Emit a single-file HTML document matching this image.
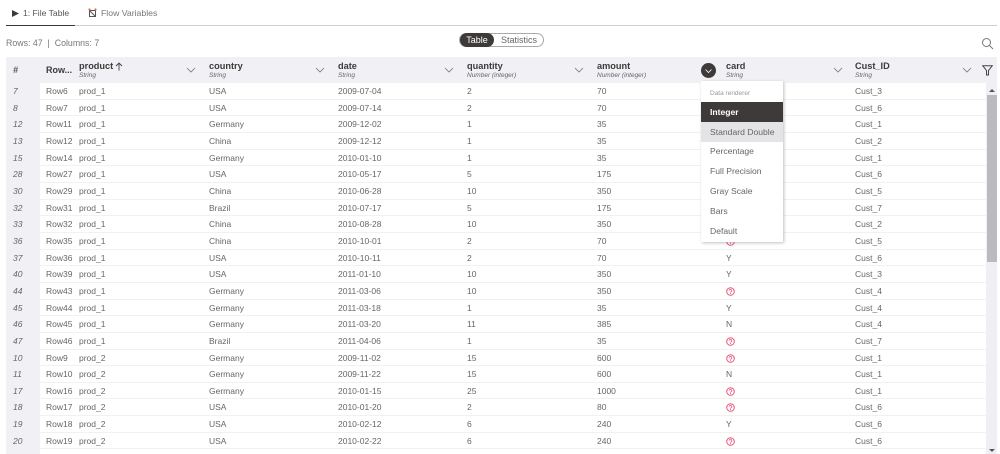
<!DOCTYPE html>
<html><head><meta charset="utf-8">
<style>
html,body{margin:0;padding:0;width:1000px;height:454px;overflow:hidden;background:#fff;font-family:"Liberation Sans",sans-serif;color:#666;font-size:8.5px}
.a{position:absolute;white-space:nowrap}
#hdr{position:absolute;left:6px;top:57px;width:991px;height:26px;background:#f0f0f5}
#idx{position:absolute;left:6px;top:83px;width:34px;height:371px;background:#f0f0f5}
#rows{position:absolute;left:0;top:83px;width:987px}
.r{position:relative;height:16.667px;line-height:17.5px;}
.r:after{content:"";position:absolute;left:40px;right:0;bottom:0;height:1px;background:#f1f1f5}
.r span{position:absolute;top:0;white-space:nowrap}
.r .n{left:13px;font-style:italic}
.r .b{left:46px}.r .c{left:79px}.r .d{left:209px}.r .e{left:338px}.r .f{left:467px}.r .g{left:597px}.r .h{left:726px}.r .i{left:855px}
.r svg{position:absolute;left:726px;top:4px}
.t{font-size:9.2px;font-weight:bold;color:#3e3a39;position:absolute;top:61px;white-space:nowrap}
.s{font-size:6.5px;font-style:italic;color:#666;position:absolute;top:72px;white-space:nowrap}
.ch{position:absolute;top:67px}
#menu{position:absolute;left:701px;top:81px;width:82px;height:161px;background:#fff;box-shadow:1px 1px 3px rgba(0,0,0,.25)}
#menu div{position:absolute;left:0;width:82px;height:20px;line-height:20px;padding-left:9px;box-sizing:border-box;font-size:8.6px;color:#666}
</style></head>
<body>
<svg class="a" style="left:12px;top:10px" width="7" height="7"><path d="M0 0L7 3.5L0 7Z" fill="#3e3a39"/></svg>
<div class="a" style="left:23px;top:8px;font-size:8.6px;color:#555;line-height:11px">1: File Table</div>
<svg class="a" style="left:88px;top:8px" width="9" height="10" fill="none"><path d="M1.5 2.5h6v6h-6z M1.5 2.5l6 6" stroke="#555" stroke-width="1"/><circle cx="1.5" cy="1.5" r="1.1" fill="#e0685f"/><circle cx="7.5" cy="1.5" r="1.1" fill="#e0685f"/></svg>
<div class="a" style="left:101px;top:8px;font-size:8.7px;color:#777;line-height:11px">Flow Variables</div>
<div class="a" style="left:6px;top:25px;width:991px;height:1px;background:#cfcfcf"></div>
<div class="a" style="left:6px;top:24.5px;width:69px;height:1.5px;background:#3e3a39"></div>
<div class="a" style="left:6px;top:38px;font-size:8.8px;color:#777;line-height:11px">Rows: 47 &nbsp;|&nbsp; Columns: 7</div>

<div class="a" style="left:459px;top:33px;width:85px;height:14px;border:1px solid #aaa;border-radius:8px;box-sizing:border-box"></div>
<div class="a" style="left:460px;top:33px;width:34px;height:14px;background:#3e3a39;border-radius:7px;color:#fff;font-size:9px;line-height:14px;text-align:center">Table</div>
<div class="a" style="left:501px;top:33px;font-size:9px;line-height:14px;color:#666">Statistics</div>
<svg class="a" style="left:981px;top:37px" width="13" height="13" fill="none" stroke="#777"><circle cx="5.5" cy="5.5" r="4"/><path d="M8.5 8.5L12 12"/></svg>

<div id="hdr"></div><div id="idx"></div>
<div class="a" style="left:13px;top:65px;font-size:9px;font-weight:bold;font-style:italic;color:#555;line-height:11px">#</div>
<div class="t" style="left:46px;top:65px;line-height:11px;font-size:9px">Row...</div>
<div class="t" style="left:79px">product</div><div class="s" style="left:79px">String</div>
<svg class="a" style="left:115px;top:62px" width="8" height="9" fill="none" stroke="#444" stroke-width=".9"><path d="M4 8.5V1M1 4l3-3l3 3"/></svg>
<div class="t" style="left:209px">country</div><div class="s" style="left:209px">String</div>
<div class="t" style="left:338px">date</div><div class="s" style="left:338px">String</div>
<div class="t" style="left:467px">quantity</div><div class="s" style="left:467px">Number (integer)</div>
<div class="t" style="left:597px">amount</div><div class="s" style="left:597px">Number (integer)</div>
<div class="t" style="left:726px">card</div><div class="s" style="left:726px">String</div>
<div class="t" style="left:855px">Cust_ID</div><div class="s" style="left:855px">String</div>
<svg class="ch" style="left:186px" width="10" height="6" fill="none" stroke="#777" stroke-width=".8"><path d="M1 1l4 4l4-4"/></svg>
<svg class="ch" style="left:315px" width="10" height="6" fill="none" stroke="#777" stroke-width=".8"><path d="M1 1l4 4l4-4"/></svg>
<svg class="ch" style="left:444px" width="10" height="6" fill="none" stroke="#777" stroke-width=".8"><path d="M1 1l4 4l4-4"/></svg>
<svg class="ch" style="left:574px" width="10" height="6" fill="none" stroke="#777" stroke-width=".8"><path d="M1 1l4 4l4-4"/></svg>
<svg class="ch" style="left:833px" width="10" height="6" fill="none" stroke="#777" stroke-width=".8"><path d="M1 1l4 4l4-4"/></svg>
<svg class="ch" style="left:962px" width="10" height="6" fill="none" stroke="#777" stroke-width=".8"><path d="M1 1l4 4l4-4"/></svg>
<svg class="a" style="left:701px;top:63px" width="15" height="15"><circle cx="7.5" cy="7.5" r="7.5" fill="#3e3a39"/><path d="M4.5 6.5l3 3l3-3" fill="none" stroke="#fff" stroke-width=".8"/></svg>
<svg class="a" style="left:982px;top:65px" width="11" height="11" fill="none" stroke="#444"><path d="M.8 .8h9.4L6.5 5.5v4.5h-2V5.5z"/></svg>

<svg width="0" height="0" style="position:absolute"><defs><g id="q"><circle cx="4.5" cy="4.5" r="3.8" fill="none" stroke="#e8537a" stroke-width="1"/><path d="M3.2 3.6a1.3 1.3 0 1 1 1.9 1.2c-.4.2-.6.4-.6.8" fill="none" stroke="#e8537a" stroke-width=".8"/><circle cx="4.5" cy="6.6" r=".5" fill="#e8537a"/></g></defs></svg>

<div id="rows">
<div class="r"><span class="n">7</span><span class="b">Row6</span><span class="c">prod_1</span><span class="d">USA</span><span class="e">2009-07-04</span><span class="f">2</span><span class="g">70</span><span class="i">Cust_3</span></div>
<div class="r"><span class="n">8</span><span class="b">Row7</span><span class="c">prod_1</span><span class="d">USA</span><span class="e">2009-07-14</span><span class="f">2</span><span class="g">70</span><span class="i">Cust_6</span></div>
<div class="r"><span class="n">12</span><span class="b">Row11</span><span class="c">prod_1</span><span class="d">Germany</span><span class="e">2009-12-02</span><span class="f">1</span><span class="g">35</span><span class="i">Cust_1</span></div>
<div class="r"><span class="n">13</span><span class="b">Row12</span><span class="c">prod_1</span><span class="d">China</span><span class="e">2009-12-12</span><span class="f">1</span><span class="g">35</span><span class="i">Cust_2</span></div>
<div class="r"><span class="n">15</span><span class="b">Row14</span><span class="c">prod_1</span><span class="d">Germany</span><span class="e">2010-01-10</span><span class="f">1</span><span class="g">35</span><span class="i">Cust_1</span></div>
<div class="r"><span class="n">28</span><span class="b">Row27</span><span class="c">prod_1</span><span class="d">USA</span><span class="e">2010-05-17</span><span class="f">5</span><span class="g">175</span><span class="i">Cust_6</span></div>
<div class="r"><span class="n">30</span><span class="b">Row29</span><span class="c">prod_1</span><span class="d">China</span><span class="e">2010-06-28</span><span class="f">10</span><span class="g">350</span><span class="i">Cust_5</span></div>
<div class="r"><span class="n">32</span><span class="b">Row31</span><span class="c">prod_1</span><span class="d">Brazil</span><span class="e">2010-07-17</span><span class="f">5</span><span class="g">175</span><span class="i">Cust_7</span></div>
<div class="r"><span class="n">33</span><span class="b">Row32</span><span class="c">prod_1</span><span class="d">China</span><span class="e">2010-08-28</span><span class="f">10</span><span class="g">350</span><span class="i">Cust_2</span></div>
<div class="r"><span class="n">36</span><span class="b">Row35</span><span class="c">prod_1</span><span class="d">China</span><span class="e">2010-10-01</span><span class="f">2</span><span class="g">70</span><svg width="9" height="9"><use href="#q"/></svg><span class="i">Cust_5</span></div>
<div class="r"><span class="n">37</span><span class="b">Row36</span><span class="c">prod_1</span><span class="d">USA</span><span class="e">2010-10-11</span><span class="f">2</span><span class="g">70</span><span class="h">Y</span><span class="i">Cust_6</span></div>
<div class="r"><span class="n">40</span><span class="b">Row39</span><span class="c">prod_1</span><span class="d">USA</span><span class="e">2011-01-10</span><span class="f">10</span><span class="g">350</span><span class="h">Y</span><span class="i">Cust_3</span></div>
<div class="r"><span class="n">44</span><span class="b">Row43</span><span class="c">prod_1</span><span class="d">Germany</span><span class="e">2011-03-06</span><span class="f">10</span><span class="g">350</span><svg width="9" height="9"><use href="#q"/></svg><span class="i">Cust_4</span></div>
<div class="r"><span class="n">45</span><span class="b">Row44</span><span class="c">prod_1</span><span class="d">Germany</span><span class="e">2011-03-18</span><span class="f">1</span><span class="g">35</span><span class="h">Y</span><span class="i">Cust_4</span></div>
<div class="r"><span class="n">46</span><span class="b">Row45</span><span class="c">prod_1</span><span class="d">Germany</span><span class="e">2011-03-20</span><span class="f">11</span><span class="g">385</span><span class="h">N</span><span class="i">Cust_4</span></div>
<div class="r"><span class="n">47</span><span class="b">Row46</span><span class="c">prod_1</span><span class="d">Brazil</span><span class="e">2011-04-06</span><span class="f">1</span><span class="g">35</span><svg width="9" height="9"><use href="#q"/></svg><span class="i">Cust_7</span></div>
<div class="r"><span class="n">10</span><span class="b">Row9</span><span class="c">prod_2</span><span class="d">Germany</span><span class="e">2009-11-02</span><span class="f">15</span><span class="g">600</span><svg width="9" height="9"><use href="#q"/></svg><span class="i">Cust_1</span></div>
<div class="r"><span class="n">11</span><span class="b">Row10</span><span class="c">prod_2</span><span class="d">Germany</span><span class="e">2009-11-22</span><span class="f">15</span><span class="g">600</span><span class="h">N</span><span class="i">Cust_1</span></div>
<div class="r"><span class="n">17</span><span class="b">Row16</span><span class="c">prod_2</span><span class="d">Germany</span><span class="e">2010-01-15</span><span class="f">25</span><span class="g">1000</span><svg width="9" height="9"><use href="#q"/></svg><span class="i">Cust_1</span></div>
<div class="r"><span class="n">18</span><span class="b">Row17</span><span class="c">prod_2</span><span class="d">USA</span><span class="e">2010-01-20</span><span class="f">2</span><span class="g">80</span><svg width="9" height="9"><use href="#q"/></svg><span class="i">Cust_6</span></div>
<div class="r"><span class="n">19</span><span class="b">Row18</span><span class="c">prod_2</span><span class="d">USA</span><span class="e">2010-02-12</span><span class="f">6</span><span class="g">240</span><span class="h">Y</span><span class="i">Cust_6</span></div>
<div class="r"><span class="n">20</span><span class="b">Row19</span><span class="c">prod_2</span><span class="d">USA</span><span class="e">2010-02-22</span><span class="f">6</span><span class="g">240</span><svg width="9" height="9"><use href="#q"/></svg><span class="i">Cust_6</span></div>
</div>

<div class="a" style="left:986px;top:83px;width:11px;height:371px;background:#f1eff3"></div>
<div class="a" style="left:987px;top:95px;width:10px;height:167px;background:#bcbabe"></div>
<svg class="a" style="left:988px;top:88px" width="8" height="5"><path d="M4 1L7 4H1Z" fill="#555"/></svg>
<svg class="a" style="left:988px;top:448px" width="8" height="5"><path d="M4 4L7 1H1Z" fill="#555"/></svg>

<div id="menu">
<div style="top:3px;font-size:6.5px;color:#999">Data renderer</div>
<div style="top:21px;background:#3e3a39;color:#fff;font-weight:bold">Integer</div>
<div style="top:41px;background:#e4e4e6">Standard Double</div>
<div style="top:60px">Percentage</div>
<div style="top:80px">Full Precision</div>
<div style="top:100px">Gray Scale</div>
<div style="top:120px">Bars</div>
<div style="top:140px">Default</div>
</div>
</body></html>
